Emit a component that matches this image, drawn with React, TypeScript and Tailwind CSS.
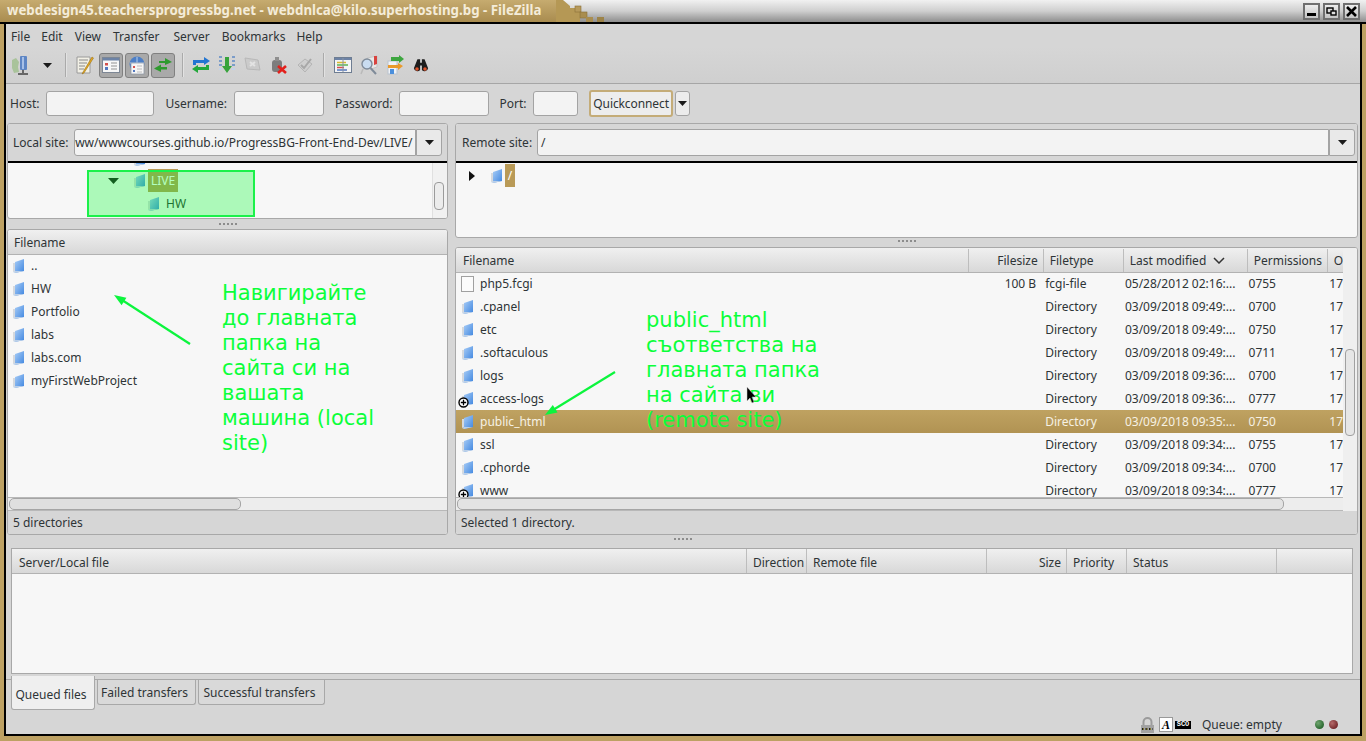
import React from 'react';

const localFiles = ['..', 'HW', 'Portfolio', 'labs', 'labs.com', 'myFirstWebProject'];

const remoteFiles = [
  { name: 'php5.fcgi', size: '100 B', type: 'fcgi-file', date: '05/28/2012 02:16:...', perm: '0755', file: true },
  { name: '.cpanel', type: 'Directory', date: '03/09/2018 09:49:...', perm: '0700' },
  { name: 'etc', type: 'Directory', date: '03/09/2018 09:49:...', perm: '0750' },
  { name: '.softaculous', type: 'Directory', date: '03/09/2018 09:49:...', perm: '0711' },
  { name: 'logs', type: 'Directory', date: '03/09/2018 09:36:...', perm: '0700' },
  { name: 'access-logs', type: 'Directory', date: '03/09/2018 09:36:...', perm: '0777', link: true },
  { name: 'public_html', type: 'Directory', date: '03/09/2018 09:35:...', perm: '0750', selected: true },
  { name: 'ssl', type: 'Directory', date: '03/09/2018 09:34:...', perm: '0755' },
  { name: '.cphorde', type: 'Directory', date: '03/09/2018 09:34:...', perm: '0700' },
  { name: 'www', type: 'Directory', date: '03/09/2018 09:34:...', perm: '0777', link: true },
];

const queueColumns = [
  { label: 'Server/Local file', cls: 'w-[735px] pl-[7px]' },
  { label: 'Direction', cls: 'w-[60px] pl-[6px]' },
  { label: 'Remote file', cls: 'w-[180px] pl-[6px]' },
  { label: 'Size', cls: 'w-[80px] pr-[5px] text-right' },
  { label: 'Priority', cls: 'w-[60px] pl-[6px]' },
  { label: 'Status', cls: 'w-[150px] pl-[6px]' },
  { label: '', cls: 'flex-1' },
];

function Folder({ link }: { link?: boolean }) {
  return (
    <span className="relative inline-block h-[16px] w-[14px] shrink-0">
      <svg width="14" height="16" viewBox="0 0 14 16">
        <defs>
          <linearGradient id="fold" x1="0" y1="0" x2="1" y2="1">
            <stop offset="0" stopColor="#a9cdf6" />
            <stop offset="1" stopColor="#3f86e0" />
          </linearGradient>
        </defs>
        <path d="M1 5 L3 5 L3 13 L1 14 Z" fill="#d5d9de" />
        <path d="M3 4 L12 1 L12 13 L3 15 Z" fill="url(#fold)" />
        <path d="M1 14 L3 13 L12 13 L3 15 Z" fill="#bcd0e8" />
      </svg>
      {link && (
        <svg className="absolute -bottom-[1px] -left-[3px]" width="11" height="11" viewBox="0 0 11 11">
          <circle cx="5.5" cy="5.5" r="4.5" fill="#fff" stroke="#000" strokeWidth="1.4" />
          <path d="M5.5 2.8 V8.2 M2.8 5.5 H8.2" stroke="#000" strokeWidth="1.3" />
        </svg>
      )}
    </span>
  );
}

function DropArrow() {
  return (
    <svg width="9" height="5" viewBox="0 0 9 5">
      <path d="M0 0 H9 L4.5 5 Z" fill="#1b1b1b" />
    </svg>
  );
}

function Field({ cls }: { cls: string }) {
  return <div className={`h-[25px] rounded-[3px] border border-[#a3a3a3] bg-[#f3f3f3] ${cls}`} />;
}

function Sep({ cls }: { cls: string }) {
  return <div className={`h-[24px] w-[2px] border-l border-[#aaaaaa] bg-[#e2e2e2] ${cls}`} />;
}

function Tool({ children, active }: { children: React.ReactNode; active?: boolean }) {
  return (
    <div className="flex h-[26px] w-[26px] shrink-0 items-center justify-center">
      <div className={`flex h-[25px] w-[24px] items-center justify-center rounded-[3px] ${active ? 'border border-[#808080] bg-[#a9a9a9]' : ''}`}>
        {children}
      </div>
    </div>
  );
}

function Splitter({ cls }: { cls: string }) {
  return (
    <div className={`flex justify-center gap-[2px] ${cls}`}>
      {[0, 1, 2, 3, 4].map((i) => (
        <span key={i} className="h-[2px] w-[2px] bg-[#8c8c8c]" />
      ))}
    </div>
  );
}

function HeadCell({ children, cls }: { children?: React.ReactNode; cls: string }) {
  return <div className={`flex h-full items-center border-r border-[#bdbdbd] ${cls}`}>{children}</div>;
}

function SiteRow({ label, pad, children }: { label: string; pad: string; children: React.ReactNode }) {
  return (
    <div className={`flex h-[39px] shrink-0 items-center border-b-2 border-black bg-[#d6d6d6] ${pad}`}>
      <span className="mr-[5px]">{label}:</span>
      {children}
    </div>
  );
}

function ToolbarIcons() {
  return (
    <div className="flex h-[36px] shrink-0 items-center pl-[2px]">
      <Tool>
        <svg width="20" height="22" viewBox="0 0 20 22">
          <path d="M1 6 L5 4 L8 8 L7 13 L8 18 L3 19 L1 14 Z" fill="#a9c39a" />
          <rect x="9" y="2" width="7" height="14" rx="1" fill="#5e86c4" />
          <rect x="11" y="3" width="2" height="12" fill="#a7c0e6" />
          <path d="M12 16 V19 M7 20 H17" stroke="#444" strokeWidth="1.5" />
        </svg>
      </Tool>
      <Tool><DropArrow /></Tool>
      <Sep cls="ml-[5px] mr-[5px]" />
      <Tool>
        <svg width="20" height="20" viewBox="0 0 20 20">
          <path d="M2 2 H15 V18 H2 Z" fill="#f2f0e6" stroke="#9a9a9a" />
          <path d="M4 5 H13 M4 8 H12 M4 11 H10 M4 14 H9" stroke="#8a8a8a" />
          <path d="M17 2 L8 17 L7 19 L9 18 L18.5 3 Z" fill="#e6a81f" stroke="#8a6510" strokeWidth=".5" />
        </svg>
      </Tool>
      <Tool active>
        <svg width="18" height="16" viewBox="0 0 18 16">
          <rect x=".5" y=".5" width="17" height="15" fill="#f7f7f7" stroke="#7d8795" />
          <rect x="1" y="1" width="16" height="2.5" fill="#6d83a6" />
          <rect x="3" y="6" width="3" height="2.5" fill="#d4504c" />
          <rect x="3" y="10" width="3" height="3" fill="#5479c0" />
          <path d="M9 6 H15 M9 9 H15 M9 12 H15" stroke="#b5b5b5" strokeWidth="1.5" />
        </svg>
      </Tool>
      <Tool active>
        <svg width="18" height="19" viewBox="0 0 18 19">
          <circle cx="9" cy="8" r="7.5" fill="#4d7fc6" />
          <path d="M2 7 H16 M9 1 V8" stroke="#b7d0ee" />
          <rect x="3" y="7" width="13" height="11" fill="#f5f5f5" stroke="#8a94a3" strokeWidth=".7" />
          <rect x="5" y="10" width="2" height="2" fill="#d4504c" />
          <rect x="5" y="14" width="2" height="2" fill="#5479c0" />
          <path d="M9 10 H14 M9 13 H14 M9 16 H14" stroke="#bbb" />
        </svg>
      </Tool>
      <Tool active>
        <svg width="20" height="16" viewBox="0 0 20 16">
          <path d="M6 4 H12 V1 L19 5 L12 8 V6 H6 Z" fill="#2f9a2f" />
          <path d="M14 10 H8 V7.5 L1 11.5 L8 15 V12.5 H14 Z" fill="#2f9a2f" />
        </svg>
      </Tool>
      <Sep cls="ml-[6px] mr-[4px]" />
      <Tool>
        <svg width="20" height="18" viewBox="0 0 20 18">
          <path d="M2 9 V4 H13 V1 L19 5 L13 9 V7 H5 V9 Z" fill="#2375d1" />
          <path d="M18 9 V14 H7 V17 L1 13 L7 9 V11 H15 V9 Z" fill="#23a83b" />
        </svg>
      </Tool>
      <Tool>
        <svg width="20" height="20" viewBox="0 0 20 20">
          <path d="M2 2 H5 M2 6 H5 M2 10 H5 M15 2 H18 M15 6 H18 M15 10 H18" stroke="#7b9cc9" strokeWidth="2" />
          <path d="M8 2 H12 V11 H15 L10 18 L5 11 H8 Z" fill="#37a33c" />
          <path d="M2 14 H5 M15 14 H18" stroke="#c4d3e8" strokeWidth="2" />
        </svg>
      </Tool>
      <Tool>
        <svg width="20" height="18" viewBox="0 0 20 18" opacity=".6">
          <path d="M2 2 L15 4 L17 14 L4 13 Z" fill="#c6c6c6" stroke="#a7a7a7" />
          <path d="M7 6 L12 10 M12 6 L7 10" stroke="#eeeeee" strokeWidth="2" />
        </svg>
      </Tool>
      <Tool>
        <svg width="20" height="20" viewBox="0 0 20 20">
          <rect x="3" y="5" width="10" height="12" rx="3" fill="#7d7d7d" />
          <rect x="6" y="2" width="4" height="4" fill="#8f8f8f" />
          <path d="M9 11 L17 18 M17 11 L9 18" stroke="#e3201b" strokeWidth="2.6" />
        </svg>
      </Tool>
      <Tool>
        <svg width="18" height="18" viewBox="0 0 18 18">
          <path d="M2 9 L9 3 L16 8 L9 16 Z" fill="#cfcfcf" stroke="#b4b4b4" />
          <path d="M5 9 L8 12 L15 3" fill="none" stroke="#a8a8a8" strokeWidth="2" />
        </svg>
      </Tool>
      <Sep cls="ml-[5px] mr-[5px]" />
      <Tool>
        <svg width="18" height="16" viewBox="0 0 18 16">
          <rect x=".5" y=".5" width="17" height="15" fill="#f4f4f4" stroke="#6e7d92" />
          <rect x="1" y="1" width="16" height="2" fill="#6d83a6" />
          <path d="M3 5.5 H12" stroke="#d9b92e" strokeWidth="1.5" />
          <path d="M3 8 H14" stroke="#5db552" strokeWidth="1.5" />
          <path d="M3 10.5 H10" stroke="#d4504c" strokeWidth="1.5" />
          <path d="M3 13 H13" stroke="#5479c0" strokeWidth="1.5" />
          <path d="M9 1 V15" stroke="#8a94a3" />
        </svg>
      </Tool>
      <Tool>
        <svg width="20" height="20" viewBox="0 0 20 20">
          <path d="M8 3 L18 1 V12 L12 14 Z" fill="#e8e8e8" stroke="#c4c4c4" />
          <path d="M15 1 L18 1 V9 L15 10 Z" fill="#d8433f" />
          <circle cx="8" cy="9" r="5" fill="#c9dcf0" stroke="#7f8b99" strokeWidth="1.4" />
          <path d="M11.5 13 L17 19" stroke="#7f8b99" strokeWidth="2" />
          <path d="M4 14 L2 19" stroke="#b9b9b9" strokeWidth="1.5" />
        </svg>
      </Tool>
      <Tool>
        <svg width="20" height="20" viewBox="0 0 20 20">
          <rect x="3" y="6" width="9" height="13" fill="#f0f3f7" stroke="#b9c3cf" />
          <path d="M6 2 H14 V0 L19 4 L14 8 V6 H6 Z" fill="#3da63f" />
          <path d="M3 10 H13 V8 L18 11 L13 15 V13 H3 Z" fill="#e99a2c" />
          <path d="M5 14 H9 V19 H5 Z" fill="#4b8fdc" />
        </svg>
      </Tool>
      <Tool>
        <svg width="16" height="15" viewBox="0 0 18 16">
          <path d="M5 1 H8 V5 H10 V1 H13 L17 11 A4 4 0 0 1 10 13 V8 H8 V13 A4 4 0 0 1 1 11 Z" fill="#1d1d1d" />
          <circle cx="4.5" cy="12" r="2" fill="#e0542b" />
          <circle cx="13.5" cy="12" r="2" fill="#e0542b" />
        </svg>
      </Tool>
    </div>
  );
}

function WinButton({ children }: { children: React.ReactNode }) {
  return (
    <div className="flex h-[17px] w-[17px] items-center justify-center border-2 border-[#6f6f6f] bg-gradient-to-b from-[#ededed] to-[#c4c4c4]">
      {children}
    </div>
  );
}

export default function App() {
  return (
    <div className="relative flex h-[741px] w-[1366px] flex-col overflow-hidden bg-[#bda163] font-['Noto_Sans',sans-serif] text-[12px] text-[#2e3436]">
      {/* title bar */}
      <div className="relative flex h-[24px] shrink-0 items-center border-b-2 border-black bg-gradient-to-b from-[#c6ab6f] to-[#a98c4f] pl-[7px]">
        <div className="absolute top-0 bottom-0 left-[563px] right-0 bg-gradient-to-b from-[#f1f1f1] via-[#cfcfcf] to-[#8e8e8e]" />
        <span className="relative text-[13.3px] font-bold text-[#f4ecd9]">
          webdesign45.teachersprogressbg.net - webdnlca@kilo.superhosting.bg - FileZilla
        </span>
        <svg className="absolute left-[556px] top-0" width="52" height="22" viewBox="0 0 52 22">
          <path d="M7 0 H7 L14 6 V8 H19 V12 H24 V22 H0 V0 Z" fill="#b59855" />
          <rect x="19" y="6" width="6" height="6" fill="#b79a5c" stroke="#8a7038" strokeWidth=".6" />
          <rect x="24" y="12" width="7" height="6" fill="#a98d50" stroke="#8a7038" strokeWidth=".6" />
          <rect x="30" y="17" width="7" height="5" fill="#a98d50" />
          <rect x="41" y="17" width="7" height="5" fill="#9c8348" />
        </svg>
        <div className="relative ml-auto mr-[6px] mt-[1px] flex gap-[3px]">
          <WinButton><span className="mt-[6px] h-[3px] w-[9px] bg-black" /></WinButton>
          <WinButton>
            <svg width="11" height="10" viewBox="0 0 11 10" fill="none"><rect x="1" y="1" width="6" height="5" stroke="#000" strokeWidth="1.4" /><rect x="5" y="4" width="5" height="4" fill="#ddd" stroke="#000" strokeWidth="1.4" /></svg>
          </WinButton>
          <WinButton>
            <svg width="11" height="11" viewBox="0 0 11 11"><path d="M1 1 L10 10 M10 1 L1 10" stroke="#000" strokeWidth="2.6" /></svg>
          </WinButton>
        </div>
      </div>

      {/* window frame */}
      <div className="mb-[5px] ml-[4px] mr-[4px] flex h-[712px] flex-col border-x-2 border-b-2 border-black bg-[#d6d6d6]">
        <div className="flex h-[23px] shrink-0 items-center gap-[12px] bg-[#d6d6d6] pl-[5px] pt-[2px]">
          <span>File</span>
          <span className="-ml-[1px]">Edit</span>
          <span>View</span>
          <span>Transfer</span>
          <span className="ml-[2px]">Server</span>
          <span>Bookmarks</span>
          <span className="-ml-[1px]">Help</span>
        </div>
        <div className="shrink-0 border-b border-[#a6a6a6] bg-gradient-to-b from-[#d6d6d6] to-[#cfcfcf]">
          <ToolbarIcons />
        </div>

        {/* quickconnect */}
        <div className="flex h-[39px] shrink-0 items-center pl-[4px]">
          <span className="mr-[7px]">Host:</span>
          <Field cls="mr-[11px] w-[108px]" />
          <span className="mr-[7px]">Username:</span>
          <Field cls="mr-[11px] w-[90px]" />
          <span className="mr-[6px]">Password:</span>
          <Field cls="mr-[11px] w-[90px]" />
          <span className="mr-[6px]">Port:</span>
          <Field cls="mr-[11px] w-[45px]" />
          <div className="flex h-[27px] w-[84px] items-center justify-center rounded-[3px] border-2 border-[#c4ac78] bg-[#ededed] pl-[1px] tracking-[-0.1px] text-[#2e3436]">
            Quickconnect
          </div>
          <div className="ml-[2px] flex h-[25px] w-[15px] items-center justify-center rounded-[3px] border border-[#a3a3a3] bg-[#ececec]">
            <DropArrow />
          </div>
        </div>

        {/* panes */}
        <div className="flex h-[412px] shrink-0 gap-[7px] pl-[1px]">
          <div className="flex w-[441px] flex-col">
            <div className="flex h-[96px] shrink-0 flex-col overflow-hidden rounded-[3px] border border-[#a8a8a8] bg-[#f7f7f7]">
              <SiteRow label="Local site" pad="pl-[5px]">
                <div className="ml-[1px] h-[27px] w-[342px] overflow-hidden rounded-l-[3px] border border-[#a3a3a3] bg-[#f3f3f3] text-right leading-[25px] whitespace-nowrap">
                  <span className="float-right pr-[3px]">www/wwwcourses.github.io/ProgressBG-Front-End-Dev/LIVE/</span>
                </div>
                <div className="flex h-[27px] w-[26px] items-center justify-center rounded-r-[3px] border border-[#a3a3a3] bg-[#e9e9e9]"><DropArrow /></div>
              </SiteRow>
              <div className="relative flex flex-1 overflow-hidden">
                <div className="relative flex-1">
                  <div className="absolute left-[125px] -top-[12px]"><Folder /></div>
                  <div className="mt-[6px] flex h-[23px] items-center pl-[100px]">
                    <svg className="mr-[14px]" width="11" height="6" viewBox="0 0 11 6"><path d="M0 0 H11 L5.5 6 Z" fill="#1a1a1a" /></svg>
                    <Folder />
                    <span className="ml-[1px] flex h-[23px] w-[30px] items-center justify-center bg-[#b99a57] text-white">LIVE</span>
                  </div>
                  <div className="flex h-[23px] items-center gap-[5px] pl-[139px]">
                    <Folder />
                    <span>HW</span>
                  </div>
                </div>
                <div className="w-[15px] shrink-0 border-l border-[#e0e0e0] bg-[#f1f1f1] pl-[1px] pt-[19px]">
                  <div className="h-[28px] w-[10px] rounded-[4px] border border-[#9b9b9b] bg-[#ececec]" />
                </div>
              </div>
            </div>
            <Splitter cls="h-[10px] shrink-0 items-center" />
            <div className="flex flex-1 flex-col overflow-hidden rounded-[3px] border border-[#a8a8a8] bg-[#f7f7f7]">
              <div className="flex h-[25px] shrink-0 items-center border-b border-[#b2b2b2] bg-gradient-to-b from-[#f0f0f0] to-[#d8d8d8] pl-[6px] pt-[1px]">Filename</div>
              <div className="-mt-[1px] flex-1">
                {localFiles.map((f) => (
                  <div key={f} className="flex h-[23px] items-center gap-[3px] pl-[4px]">
                    <Folder />
                    <span className="ml-[2px]">{f}</span>
                  </div>
                ))}
              </div>
              <div className="h-[14px] shrink-0 border-y border-[#b8b8b8] bg-[#ededed] pl-[1px]">
                <div className="h-[12px] w-[232px] rounded-[5px] border border-[#a5a5a5] bg-[#dfdfdf]" />
              </div>
              <div className="flex h-[23px] shrink-0 items-center bg-[#d6d6d6] pl-[5px]">5 directories</div>
            </div>
          </div>

          <div className="flex w-[903px] flex-col">
            <div className="flex h-[115px] shrink-0 flex-col overflow-hidden rounded-[3px] border border-[#a8a8a8] bg-[#f7f7f7]">
              <SiteRow label="Remote site" pad="pl-[6px]">
                <div className="h-[27px] w-[792px] rounded-l-[3px] border border-[#a3a3a3] bg-[#f3f3f3] pl-[3px] leading-[25px]">/</div>
                <div className="flex h-[27px] w-[26px] items-center justify-center rounded-r-[3px] border border-[#a3a3a3] bg-[#e9e9e9]"><DropArrow /></div>
              </SiteRow>
              <div className="flex items-center pl-[13px] pt-[1px]">
                <svg className="mr-[15px]" width="6" height="10" viewBox="0 0 6 10"><path d="M0 0 V10 L6 5 Z" fill="#111" /></svg>
                <Folder />
                <span className="ml-[1px] flex h-[23px] w-[10px] items-center justify-center bg-[#b99a57] text-white">/</span>
              </div>
            </div>
            <Splitter cls="h-[9px] shrink-0 pt-[2px]" />
            <div className="relative flex flex-1 flex-col overflow-hidden rounded-[3px] border border-[#a8a8a8] bg-[#f7f7f7]">
              <div className="flex min-h-0 flex-1 overflow-hidden">
                <div className="flex min-w-0 flex-1 flex-col">
                  <div className="flex h-[25px] shrink-0 border-b border-[#b2b2b2] bg-gradient-to-b from-[#f0f0f0] to-[#d8d8d8] pt-[1px]">
                    <HeadCell cls="w-[513px] pl-[7px]">Filename</HeadCell>
                    <HeadCell cls="w-[75px] justify-end pr-[5px]">Filesize</HeadCell>
                    <HeadCell cls="w-[80px] pl-[6px]">Filetype</HeadCell>
                    <HeadCell cls="w-[124px] pl-[6px]">
                      Last modified
                      <svg className="ml-[7px]" width="12" height="7" viewBox="0 0 12 7"><path d="M1 1 L6 6 L11 1" fill="none" stroke="#333" strokeWidth="1.5" /></svg>
                    </HeadCell>
                    <HeadCell cls="w-[80px] pl-[6px]">Permissions</HeadCell>
                    <div className="flex items-center pl-[6px]">O</div>
                  </div>
                  <div className="-mt-[1px] min-h-0 flex-1 overflow-hidden">
                    {remoteFiles.map((f) => (
                      <div
                        key={f.name}
                        className={`flex h-[23px] items-center whitespace-nowrap ${f.selected ? 'bg-gradient-to-b from-[#bfa261] to-[#b19353] text-[#f6f1e4]' : ''}`}
                      >
                        <div className="flex w-[513px] items-center pl-[5px]">
                          {f.file ? (
                            <span className="h-[16px] w-[13px] border border-[#a0a0a0] bg-[#fbfbfb]" />
                          ) : (
                            <Folder link={f.link} />
                          )}
                          <span className={f.file ? 'ml-[6px]' : 'ml-[5px]'}>{f.name}</span>
                        </div>
                        <div className="w-[75px] pr-[6px] text-right">{f.size}</div>
                        <div className="w-[80px] pl-[3px]">{f.type}</div>
                        <div className="w-[124px] pl-[3px]">{f.date}</div>
                        <div className="w-[80px] pl-[3px]">{f.perm}</div>
                        <div className="pl-[4px]">17</div>
                      </div>
                    ))}
                  </div>
                </div>
                <div className="w-[14px] shrink-0 bg-[#efefef] pt-[101px]">
                  <div className="ml-[2px] h-[87px] w-[10px] rounded-[4px] border border-[#a0a0a0] bg-[#e6e6e6]" />
                </div>
              </div>
              <div className="flex h-[14px] shrink-0 bg-[#efefef]">
                <div className="h-[14px] flex-1 border-y border-[#b8b8b8] bg-[#ededed] pl-[1px]">
                  <div className="h-[12px] w-[827px] rounded-[5px] border border-[#a5a5a5] bg-[#e3e3e3]" />
                </div>
                <div className="w-[14px]" />
              </div>
              <div className="flex h-[23px] shrink-0 items-center bg-[#d6d6d6] pl-[5px]">Selected 1 directory.</div>
            </div>
          </div>
        </div>

        <Splitter cls="h-[13px] shrink-0 pt-[3px]" />

        {/* queue */}
        <div className="relative ml-[5px] mr-[7px] flex h-[126px] shrink-0 flex-col border border-[#a8a8a8] bg-[#f7f7f7]">
          <div className="flex h-[25px] shrink-0 border-b border-[#b2b2b2] bg-gradient-to-b from-[#f0f0f0] to-[#d8d8d8]">
            {queueColumns.map((c) => (
              <div key={c.label} className={`h-full border-r border-[#bdbdbd] pt-[1px] leading-[25px] last:border-r-0 ${c.cls}`}>{c.label}</div>
            ))}
          </div>
        </div>

        {/* tabs */}
        <div className="relative mt-[5px] flex h-[36px] shrink-0 items-start border-t border-[#a8a8a8] pl-[5px]">
          <div className="relative z-10 -mt-[4px] flex h-[34px] w-[84px] items-center justify-center rounded-b-[3px] border border-t-0 border-[#a8a8a8] bg-[#efefef] pr-[4px] pt-[5px]">Queued files</div>
          <div className="ml-[2px] flex h-[25px] w-[99px] items-center justify-center rounded-b-[3px] border border-t-0 border-[#a8a8a8] bg-[#d9d9d9] pr-[4px] pt-[1px]">Failed transfers</div>
          <div className="ml-[2px] flex h-[25px] w-[127px] items-center justify-center rounded-b-[3px] border border-t-0 border-[#a8a8a8] bg-[#d9d9d9] pr-[4px] pt-[1px]">Successful transfers</div>
        </div>

        {/* status */}
        <div className="flex flex-1 items-center justify-end pr-[22px]">
          <svg className="mr-[4px]" width="15" height="16" viewBox="0 0 15 16">
            <path d="M3.5 8 V5 A4 4 0 0 1 11.5 5 V8" fill="none" stroke="#9b9b9b" strokeWidth="2" />
            <rect x="1" y="8" width="13" height="8" fill="#a2a2a2" />
            <path d="M2 12 H13" stroke="#1b1b1b" strokeWidth="2" strokeDasharray="2 1.5" />
            <path d="M3 12 H12" stroke="#e3cf3a" strokeWidth="1" strokeDasharray="1 2.5" />
          </svg>
          <div className="mr-[2px] flex h-[15px] w-[14px] items-center justify-center border border-[#999] bg-white font-['Liberation_Serif',serif] text-[12px] font-bold italic leading-none text-black">A</div>
          <div className="mr-[11px] flex h-[8px] w-[16px] items-center justify-center bg-black font-['Liberation_Mono',monospace] text-[7px] font-bold leading-none text-white">SCO</div>
          <span className="mr-[29px] w-[84px]">Queue: empty</span>
          <span className="mr-[5px] h-[9px] w-[9px] rounded-full bg-[radial-gradient(circle_at_35%_35%,#6fa56f,#0f4f16)]" />
          <span className="h-[9px] w-[9px] rounded-full bg-[radial-gradient(circle_at_35%_35%,#b56a6a,#5c0f13)]" />
        </div>
      </div>

      {/* annotations drawn over the window */}
      <div className="absolute left-[87px] top-[170px] h-[47px] w-[168px] border-2 border-[#1bf14a] bg-[#00ff2a]/30" />
      <div className="absolute left-[222px] top-[281px] w-[180px] font-['DejaVu_Sans',sans-serif] text-[21px] leading-[25px] text-[#0bff3a]">
        Навигирайте<br />до главната<br />папка на<br />сайта си на<br />вашата<br />машина (local<br />site)
      </div>
      <div className="absolute left-[646px] top-[308px] w-[200px] font-['DejaVu_Sans',sans-serif] text-[21px] leading-[25px] text-[#0bff3a]">
        public_html<br />съответства на<br />главната папка<br />на сайта ви<br />(remote site)
      </div>
      <svg className="absolute left-0 top-0" width="1366" height="741" viewBox="0 0 1366 741" fill="none">
        <path d="M190 344 L122 300" stroke="#0cf53d" strokeWidth="2.2" />
        <path d="M114 295 L126.4 297.7 L121.6 305.3 Z" fill="#0cf53d" />
        <path d="M615 372 L553 410" stroke="#0cf53d" strokeWidth="2.2" />
        <path d="M545 415 L557.6 412.5 L552.8 404.9 Z" fill="#0cf53d" />
        <path d="M747 387 V401 L750 398 L752 403 L754 402 L752 397 L756 397 Z" fill="#000" stroke="#cccccc" strokeWidth=".5" />
      </svg>
    </div>
  );
}
